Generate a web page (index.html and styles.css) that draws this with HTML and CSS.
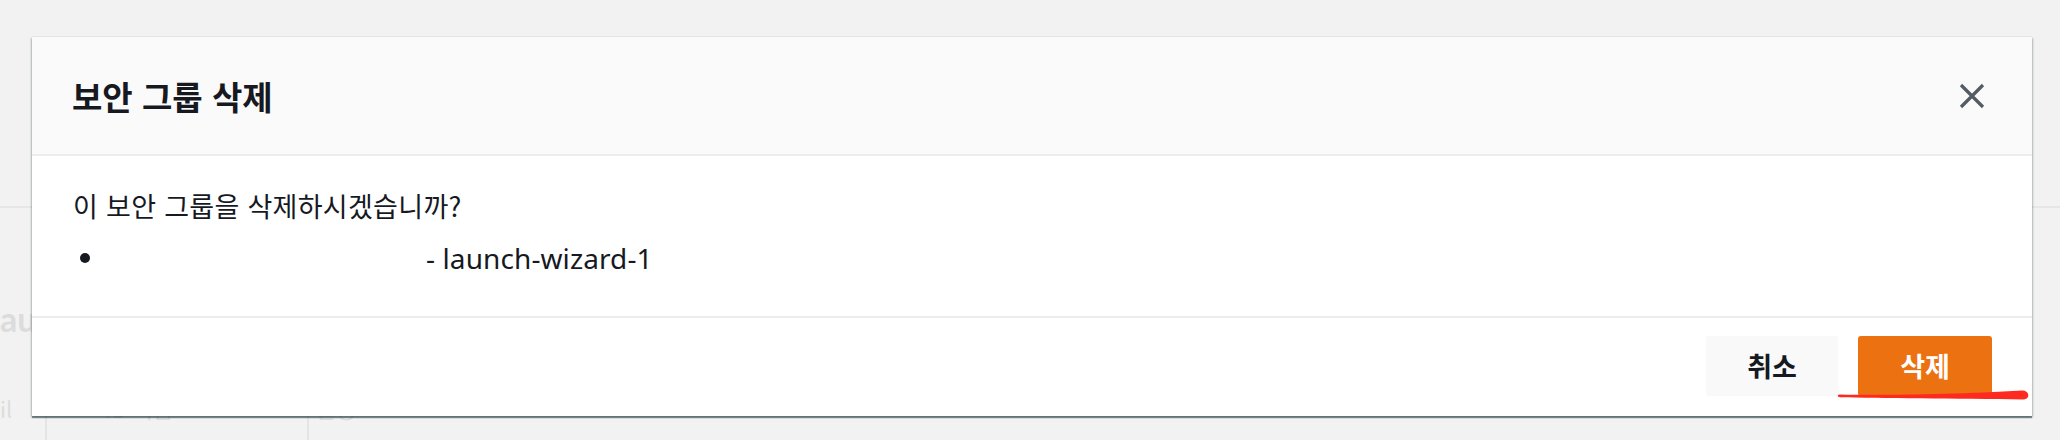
FILE: index.html
```html
<!DOCTYPE html>
<html lang="ko">
<head>
<meta charset="utf-8">
<title>보안 그룹 삭제</title>
<link rel="stylesheet" href="styles.css">
</head>
<body>
<div class="page">
  <div class="bg-top"></div>
  <div class="bg-rule"></div>
  <div class="bg-label">aunch-wizard-1</div>
  <div class="bg-row">
    <div class="bg-cell c1">il</div>
    <div class="bg-cell c2">ID 이름</div>
    <div class="bg-cell c3">설명</div>
  </div>
</div>

<div class="modal" role="dialog" aria-labelledby="modal-title">
  <div class="modal-header">
    <h2 id="modal-title" class="modal-title">보안 그룹 삭제</h2>
    <button class="close-btn" aria-label="닫기">
      <svg width="26" height="26" viewBox="0 0 26 26"><path d="M2 2 L24 24 M24 2 L2 24" stroke="#545b64" stroke-width="3.2" fill="none"/></svg>
    </button>
  </div>
  <div class="modal-body">
    <p class="question">이 보안 그룹을 삭제하시겠습니까?</p>
    <ul class="group-list">
      <li class="group-item"><span class="bullet"></span><span class="redacted"></span><span class="group-name">- launch-wizard-1</span></li>
    </ul>
  </div>
  <div class="modal-footer">
    <button class="btn btn-cancel">취소</button>
    <button class="btn btn-delete">삭제</button>
  </div>
</div>

<svg class="annotation" width="200" height="16" viewBox="0 0 200 16">
  <path d="M3 8.5 C 40 9.5, 120 8.5, 185 4.5 C 192 4.2, 194 12.5, 187 13.5 C 120 12.5, 40 12.2, 3 11.2 C 0 11, 0 8.5, 3 8.5 Z" fill="#ff2a1f"/>
</svg>
</body>
</html>
```

FILE: styles.css
```css
* { box-sizing: border-box; }

html, body {
  margin: 0;
  padding: 0;
}

body {
  width: 2060px;
  height: 440px;
  overflow: hidden;
  background: #f2f2f2;
  font-family: "Noto Sans CJK KR", "Noto Sans", sans-serif;
  color: #16191f;
  position: relative;
}

.page {
  width: 100%;
  height: 100%;
  display: flex;
  flex-direction: column;
}

.bg-top {
  height: 206px;
  flex: none;
}

.bg-rule {
  height: 2px;
  background: #e6e6e6;
  flex: none;
}

.bg-label {
  margin-top: 91px;
  margin-left: 0;
  font-family: "Lato", sans-serif;
  font-weight: 700;
  font-size: 34px;
  color: #dcdcdc;
  line-height: 40px;
  white-space: nowrap;
  flex: none;
}

.bg-row {
  margin-top: 56px;
  display: flex;
  height: 60px;
  flex: none;
}

.bg-cell {
  color: #dddddd;
  font-size: 22px;
  line-height: 26px;
  border-right: 2px solid #e4e4e4;
}

.c1 { width: 47px; }
.c2 { width: 262px; padding-left: 58px; }
.c3 { width: 300px; padding-left: 6px; border-right: none; }

/* Modal */
.modal {
  position: absolute;
  left: 32px;
  top: 37px;
  width: 2000px;
  background: #ffffff;
  box-shadow: 0 2px 1px 0 rgba(0, 28, 36, 0.45), 1px 1px 2px 0 rgba(0, 28, 36, 0.2), -1px 1px 2px 0 rgba(0, 28, 36, 0.2), 0 -1px 0 0 #e9ebeb;
  display: flex;
  flex-direction: column;
}

.modal-header {
  height: 119px;
  background: #fafafa;
  border-bottom: 2px solid #eaeded;
  display: flex;
  align-items: center;
  justify-content: space-between;
  padding: 0 47px 0 40px;
}

.modal-title {
  margin: 0;
  font-size: 33px;
  font-weight: 700;
  line-height: 40px;
  color: #16191f;
}

.close-btn {
  background: none;
  border: none;
  padding: 0;
  width: 26px;
  height: 26px;
  display: block;
  cursor: pointer;
}

.close-btn svg { display: block; }

.modal-body {
  height: 162px;
  border-bottom: 2px solid #eaeded;
  padding: 32px 41px 0 41px;
  font-size: 27px;
}

.question {
  margin: 0 0 16px 0;
  line-height: 36px;
  letter-spacing: 0.3px;
}

.group-list {
  list-style: none;
  margin: 0;
  padding: 0;
}

.group-item {
  display: flex;
  align-items: center;
  line-height: 36px;
}

.bullet {
  width: 10px;
  height: 10px;
  border-radius: 50%;
  background: #16191f;
  margin-left: 7px;
  flex: none;
}

.redacted {
  width: 336px;
  height: 30px;
  background: #ffffff;
  flex: none;
}

.group-name {
  font-family: "Noto Sans", sans-serif;
  font-size: 28px;
  letter-spacing: 0.1px;
}

.modal-footer {
  height: 98px;
  display: flex;
  justify-content: flex-end;
  align-items: flex-start;
  gap: 20px;
  padding: 18px 40px 0 0;
}

.btn {
  height: 60px;
  border: none;
  border-radius: 3px;
  font-family: "Noto Sans CJK KR", sans-serif;
  font-size: 27px;
  font-weight: 700;
  line-height: 60px;
  padding: 0;
  cursor: pointer;
}

.btn-cancel {
  width: 132px;
  background: #f9f9f9;
  color: #16191f;
}

.btn-delete {
  width: 134px;
  background: #ec7211;
  color: #ffffff;
}

.annotation {
  position: absolute;
  left: 1837px;
  top: 386px;
}
```
